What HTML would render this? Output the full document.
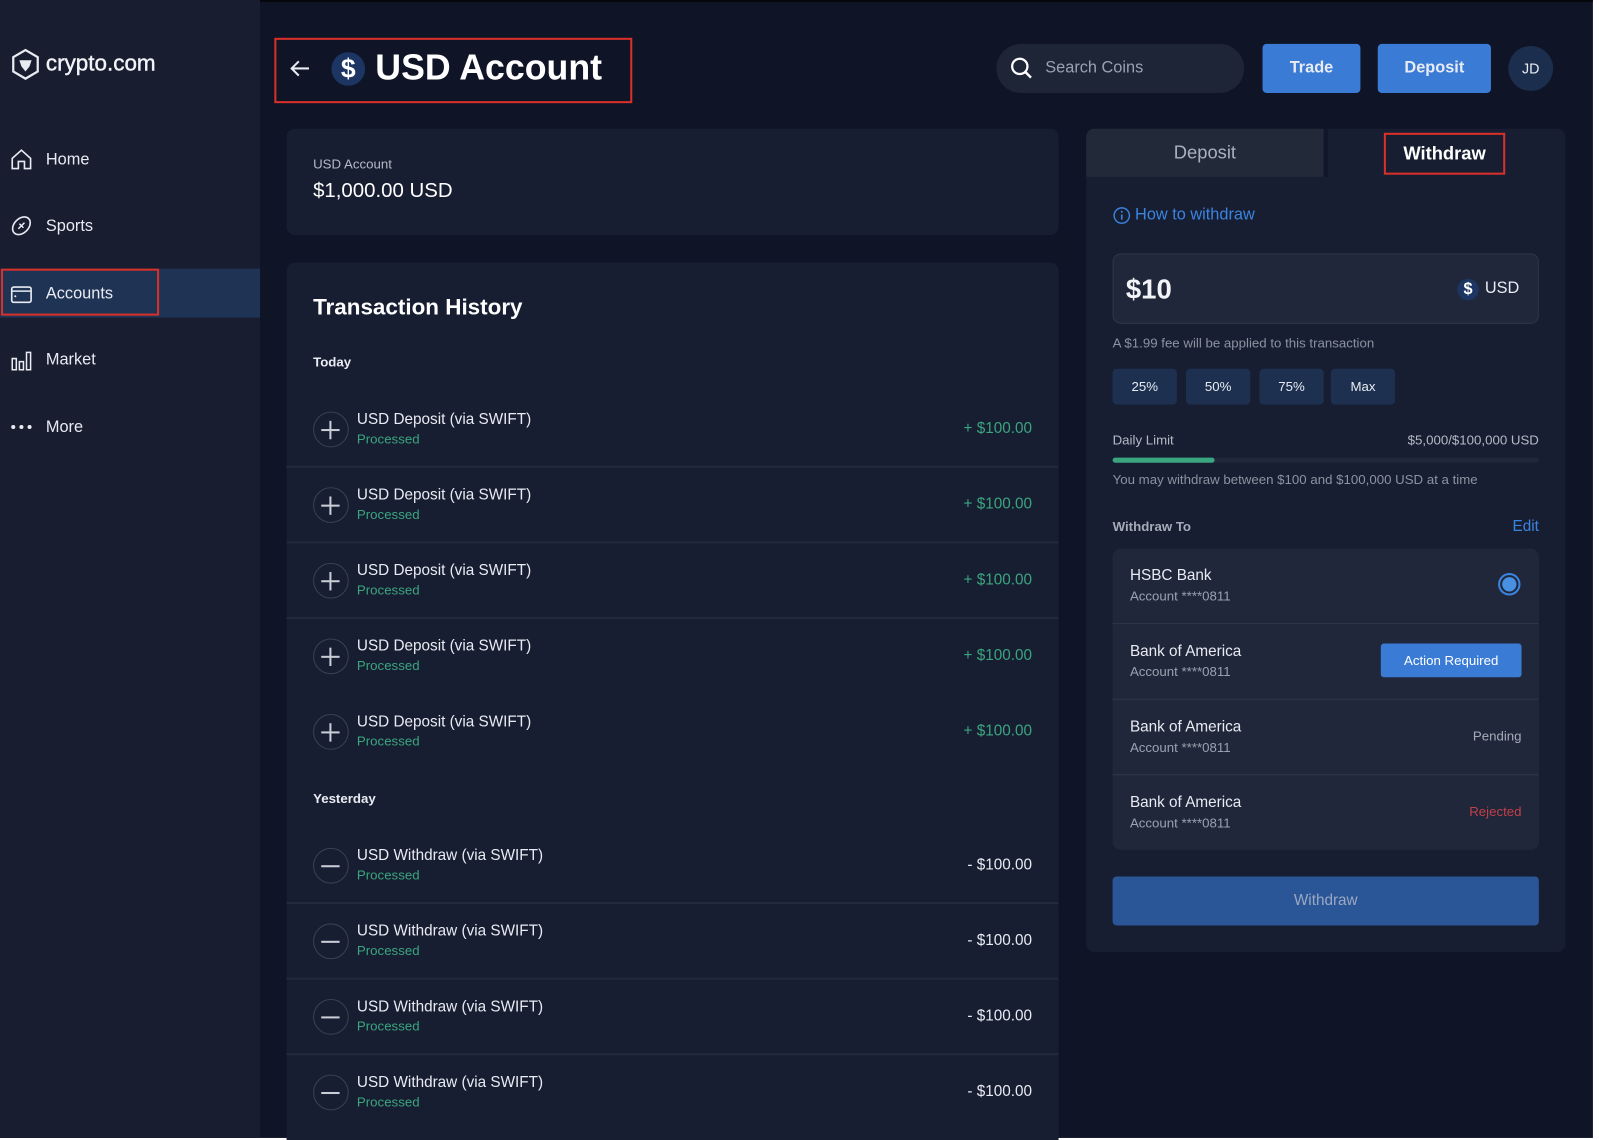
<!DOCTYPE html>
<html><head><meta charset="utf-8"><style>
*{margin:0;padding:0;box-sizing:border-box}
body{width:1599px;height:1140px;overflow:hidden;background:#fff;font-family:"Liberation Sans",sans-serif;color:#e8ebf2}
#w{position:absolute;left:0;top:0;width:1568px;height:1116px;transform:scale(1.0198,1.0215);transform-origin:0 0;background:#fff;overflow:hidden}
.a{position:absolute}
#main{left:0;top:0;width:1562px;height:1114px;background:#0f1427;border-top:2px solid #05070d}
#side{left:0;top:0;width:255px;height:1114px;background:#181d30}
.nav{position:absolute;left:10px;font-size:16px;color:#e8ebf2}
.nav span{position:absolute;left:35px;top:-8px;white-space:nowrap}
.card{position:absolute;background:#181e31;border-radius:8px}
.row{position:absolute;left:0;width:757px;height:74px}
.row .c{position:absolute;left:26px;top:20px;width:35px;height:35px;border:1.5px solid #3a4152;border-radius:50%}
.row .c:before{content:"";position:absolute;left:7px;top:15.5px;width:18px;height:2px;background:#c9cdd6}
.row .c.plus:after{content:"";position:absolute;left:15px;top:7.5px;width:2px;height:18px;background:#c9cdd6}
.row .t{position:absolute;left:69px;top:19px;font-size:15px;color:#e8ebf2}
.row .p{position:absolute;left:69px;top:39px;font-size:13px;color:#3aa57f}
.row .m{position:absolute;right:26px;top:28px;font-size:15px}
.sep{position:absolute;left:0;width:757px;height:2px;background:#232a3c}
.pct{position:absolute;top:361px;width:63px;height:35px;background:#1d3050;border-radius:4px;font-size:13px;text-align:center;line-height:35px;color:#e8ebf2}
.bk{position:absolute;left:17px;font-size:15px;color:#e8ebf2}
.ac{position:absolute;left:17px;font-size:13px;color:#9aa1b0}
.red{position:absolute;border:2px solid #d9302a}
</style></head><body><div id="w">
<div id="main" class="a"></div>
<div id="side" class="a"></div>
<svg class="a" style="left:10px;top:47px" width="30" height="32" viewBox="0 0 30 32"><path d="M15 2 L27 9 L27 23 L15 30 L3 23 L3 9 Z" fill="none" stroke="#e8ebf2" stroke-width="2.2"/><path d="M9 12 h12 l-2 6 l-4 5 l-4 -5 z" fill="#e8ebf2"/></svg>
<div class="a" style="left:45px;top:49px;font-size:22px;color:#f2f4f8;-webkit-text-stroke:0.4px #f2f4f8">crypto.com</div>
<div class="a" style="left:0;top:263px;width:255px;height:48px;background:#1f3354"></div>
<div class="nav" style="top:156px"><svg width="22" height="22" viewBox="0 0 22 22" style="position:absolute;top:-11px"><path d="M2 10 L11 2 L20 10 V20 H14 V13 H8 V20 H2 Z" fill="none" stroke="#e8ebf2" stroke-width="1.6"/></svg><span>Home</span></div>
<div class="nav" style="top:221px"><svg width="22" height="22" viewBox="0 0 22 22" style="position:absolute;top:-11px"><ellipse cx="11" cy="11" rx="10" ry="7" transform="rotate(-45 11 11)" fill="none" stroke="#e8ebf2" stroke-width="1.6"/><path d="M8 14 L14 8 M9 9 l4 4" stroke="#e8ebf2" stroke-width="1.4"/></svg><span>Sports</span></div>
<div class="nav" style="top:287px"><svg width="22" height="22" viewBox="0 0 22 22" style="position:absolute;top:-10px"><rect x="1.5" y="4" width="19" height="15" rx="2" fill="none" stroke="#e8ebf2" stroke-width="1.6"/><path d="M1.5 8 H20" stroke="#e8ebf2" stroke-width="1.4"/><circle cx="5" cy="13" r="1" fill="#e8ebf2"/></svg><span>Accounts</span></div>
<div class="nav" style="top:352px"><svg width="22" height="22" viewBox="0 0 22 22" style="position:absolute;top:-10px"><path d="M2 20 V9 H6 V20 Z M9 20 V12 H13 V20 Z M16 20 V3 H20 V20 Z" fill="none" stroke="#e8ebf2" stroke-width="1.5"/></svg><span>Market</span></div>
<div class="nav" style="top:418px"><svg width="22" height="6" style="position:absolute;top:-3px"><circle cx="3" cy="3" r="2" fill="#e8ebf2"/><circle cx="11" cy="3" r="2" fill="#e8ebf2"/><circle cx="19" cy="3" r="2" fill="#e8ebf2"/></svg><span>More</span></div>
<div class="red" style="left:1px;top:263px;width:155px;height:46px"></div>
<div class="red" style="left:269px;top:37px;width:351px;height:64px"></div>
<svg class="a" style="left:283px;top:57px" width="22" height="20" viewBox="0 0 22 20"><path d="M20 10 H3 M10 3 L3 10 L10 17" fill="none" stroke="#e8ebf2" stroke-width="2"/></svg>
<div class="a" style="left:325px;top:51px;width:33px;height:33px;border-radius:50%;background:#1c3563;text-align:center;font-size:26px;font-weight:bold;line-height:33px;color:#fff">$</div>
<div class="a" style="left:368px;top:47px;font-size:35px;font-weight:bold;color:#fff">USD Account</div>
<div class="a" style="left:977px;top:43px;width:243px;height:48px;border-radius:24px;background:#1e2536"></div>
<svg class="a" style="left:990px;top:55px" width="24" height="24" viewBox="0 0 24 24"><circle cx="10" cy="10" r="7.5" fill="none" stroke="#fff" stroke-width="2.2"/><path d="M15.5 15.5 L21 21" stroke="#fff" stroke-width="2.4"/></svg>
<div class="a" style="left:1025px;top:58px;font-size:16px;color:#9aa1b0">Search Coins</div>
<div class="a" style="left:1238px;top:43px;width:96px;height:48px;background:#3a7bd5;border-radius:4px;text-align:center;line-height:48px;font-size:16px;font-weight:bold">Trade</div>
<div class="a" style="left:1351px;top:43px;width:111px;height:48px;background:#3a7bd5;border-radius:4px;text-align:center;line-height:48px;font-size:16px;font-weight:bold">Deposit</div>
<div class="a" style="left:1479px;top:45px;width:44px;height:44px;border-radius:50%;background:#1b2e4d;text-align:center;line-height:44px;font-size:14px">JD</div>
<div class="card" style="left:281px;top:126px;width:757px;height:104px">
<div class="a" style="left:26px;top:27px;font-size:13px;color:#b5bac6">USD Account</div>
<div class="a" style="left:26px;top:50px;font-size:20px;color:#fff">$1,000.00 USD</div></div>
<div class="card" style="left:281px;top:257px;width:757px;height:880px">
<div class="a" style="left:26px;top:31px;font-size:22px;font-weight:bold;color:#fff">Transaction History</div>
<div class="a" style="left:26px;top:90px;font-size:13px;font-weight:bold">Today</div>
<div class="row" style="top:126px"><div class="c plus"></div><div class="t">USD Deposit (via SWIFT)</div><div class="p">Processed</div><div class="m" style="color:#3aa57f">+ $100.00</div></div>
<div class="sep" style="top:199px"></div>
<div class="row" style="top:200px"><div class="c plus"></div><div class="t">USD Deposit (via SWIFT)</div><div class="p">Processed</div><div class="m" style="color:#3aa57f">+ $100.00</div></div>
<div class="sep" style="top:273px"></div>
<div class="row" style="top:274px"><div class="c plus"></div><div class="t">USD Deposit (via SWIFT)</div><div class="p">Processed</div><div class="m" style="color:#3aa57f">+ $100.00</div></div>
<div class="sep" style="top:347px"></div>
<div class="row" style="top:348px"><div class="c plus"></div><div class="t">USD Deposit (via SWIFT)</div><div class="p">Processed</div><div class="m" style="color:#3aa57f">+ $100.00</div></div>
<div class="row" style="top:422px"><div class="c plus"></div><div class="t">USD Deposit (via SWIFT)</div><div class="p">Processed</div><div class="m" style="color:#3aa57f">+ $100.00</div></div>
<div class="a" style="left:26px;top:517px;font-size:13px;font-weight:bold">Yesterday</div>
<div class="row" style="top:553px"><div class="c"></div><div class="t">USD Withdraw (via SWIFT)</div><div class="p">Processed</div><div class="m">- $100.00</div></div>
<div class="sep" style="top:626px"></div>
<div class="row" style="top:627px"><div class="c"></div><div class="t">USD Withdraw (via SWIFT)</div><div class="p">Processed</div><div class="m">- $100.00</div></div>
<div class="sep" style="top:700px"></div>
<div class="row" style="top:701px"><div class="c"></div><div class="t">USD Withdraw (via SWIFT)</div><div class="p">Processed</div><div class="m">- $100.00</div></div>
<div class="sep" style="top:774px"></div>
<div class="row" style="top:775px"><div class="c"></div><div class="t">USD Withdraw (via SWIFT)</div><div class="p">Processed</div><div class="m">- $100.00</div></div>
</div>
<div class="card" style="left:1065px;top:126px;width:470px;height:806px;overflow:hidden">
<div class="a" style="left:0;top:0;width:233px;height:47px;background:#222939;text-align:center;line-height:47px;font-size:18px;color:#aab0bd">Deposit</div>
<div class="a" style="left:233px;top:0;width:4px;height:47px;background:#11162a"></div>
<div class="a" style="left:292px;top:4px;width:119px;height:41px;text-align:center;line-height:41px;font-size:18px;color:#fff;font-weight:bold">Withdraw</div>
<svg class="a" style="left:26px;top:76px" width="18" height="18" viewBox="0 0 18 18"><circle cx="9" cy="9" r="7.5" fill="none" stroke="#3a84e0" stroke-width="1.4"/><path d="M9 8 v5" stroke="#3a84e0" stroke-width="1.6"/><circle cx="9" cy="5.3" r="1" fill="#3a84e0"/></svg>
<div class="a" style="left:48px;top:76px;font-size:16px;color:#3a84e0">How to withdraw</div>
<div class="a" style="left:26px;top:122px;width:418px;height:69px;background:#20273a;border:1px solid #2e3648;border-radius:8px">
<div class="a" style="left:12px;top:19px;font-size:27px;color:#f2f4f8;font-weight:bold">$10</div>
<div class="a" style="left:337px;top:24px;width:21px;height:21px;border-radius:50%;background:#1c3563;text-align:center;line-height:21px;font-size:16px;font-weight:bold;color:#fff">$</div>
<div class="a" style="left:364px;top:25px;font-size:16px;color:#e8ebf2">USD</div></div>
<div class="a" style="left:26px;top:202px;font-size:13px;color:#8b92a1">A $1.99 fee will be applied to this transaction</div>
</div>
<div class="pct" style="left:1091px">25%</div><div class="pct" style="left:1163px">50%</div><div class="pct" style="left:1235px">75%</div><div class="pct" style="left:1305px">Max</div>
<div class="a" style="left:1091px;top:423px;font-size:13px;color:#b5bac6">Daily Limit</div>
<div class="a" style="left:1309px;top:423px;width:200px;text-align:right;font-size:13px;color:#b5bac6">$5,000/$100,000 USD</div>
<div class="a" style="left:1091px;top:448px;width:418px;height:5px;border-radius:3px;background:#20273a"></div>
<div class="a" style="left:1091px;top:448px;width:100px;height:5px;border-radius:3px;background:#3aa57f"></div>
<div class="a" style="left:1091px;top:462px;font-size:13px;color:#8b92a1">You may withdraw between $100 and $100,000 USD at a time</div>
<div class="a" style="left:1091px;top:508px;font-size:13px;font-weight:bold;color:#a5abb8">Withdraw To</div>
<div class="a" style="left:1450px;top:507px;width:59px;text-align:right;font-size:15px;color:#3a84e0">Edit</div>
<div class="a" style="left:1091px;top:537px;width:418px;height:295px;background:#20273a;border-radius:8px;overflow:hidden">
<div class="bk" style="top:18px">HSBC Bank</div><div class="ac" style="top:39px">Account ****0811</div>
<div class="a" style="left:378px;top:24px;width:22px;height:22px;border-radius:50%;border:2px solid #3a84e0;padding:2px"><div style="width:14px;height:14px;border-radius:50%;background:#4a90e2"></div></div>
<div class="a" style="left:0;top:73px;width:418px;height:1px;background:#2e3648"></div>
<div class="bk" style="top:92px">Bank of America</div><div class="ac" style="top:113px">Account ****0811</div>
<div class="a" style="left:263px;top:93px;width:138px;height:33px;background:#3a7bd5;border-radius:3px;text-align:center;line-height:33px;font-size:13px;color:#fff">Action Required</div>
<div class="a" style="left:0;top:147px;width:418px;height:1px;background:#2e3648"></div>
<div class="bk" style="top:166px">Bank of America</div><div class="ac" style="top:187px">Account ****0811</div>
<div class="a" style="right:17px;top:176px;font-size:13px;color:#a5abb8">Pending</div>
<div class="a" style="left:0;top:221px;width:418px;height:1px;background:#2e3648"></div>
<div class="bk" style="top:240px">Bank of America</div><div class="ac" style="top:261px">Account ****0811</div>
<div class="a" style="right:17px;top:250px;font-size:13px;color:#c0404a">Rejected</div>
</div>
<div class="a" style="left:1091px;top:858px;width:418px;height:48px;background:#2a5596;border-radius:4px;text-align:center;line-height:48px;font-size:15px;color:#9aa9c2">Withdraw</div>
<div class="red" style="left:1357px;top:130px;width:119px;height:41px"></div>
</div></body></html>
